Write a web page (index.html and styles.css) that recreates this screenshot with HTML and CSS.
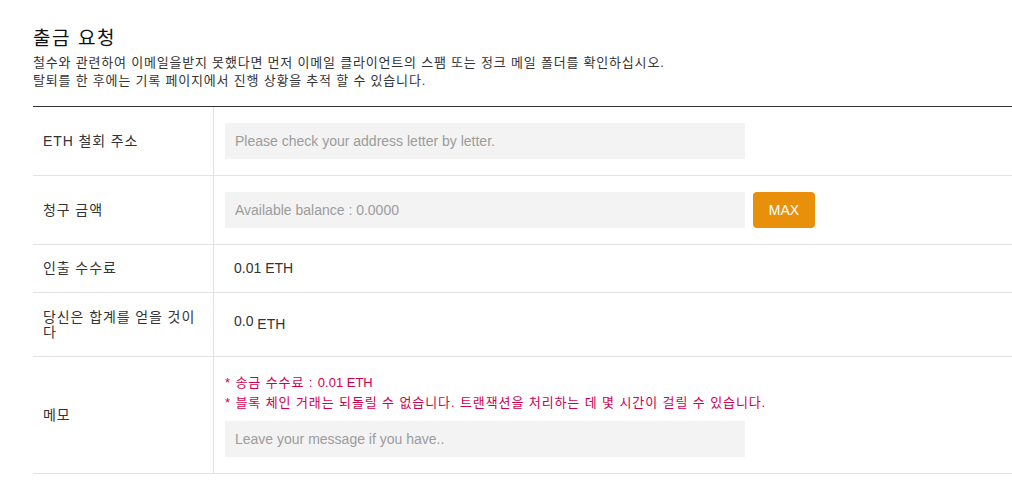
FILE: index.html
```html
<!DOCTYPE html>
<html lang="ko">
<head>
<meta charset="utf-8">
<title>출금 요청</title>
<link rel="stylesheet" href="styles.css">
</head>
<body>
<div class="page">
  <h1 class="title">출금 요청</h1>
  <p class="desc">철수와 관련하여 이메일을받지 못했다면 먼저 이메일 클라이언트의 스팸 또는 정크 메일 폴더를 확인하십시오.<br>탈퇴를 한 후에는 기록 페이지에서 진행 상황을 추적 할 수 있습니다.</p>
  <div class="form">
    <div class="row">
      <div class="label">ETH 철회 주소</div>
      <div class="value"><input class="field" type="text" placeholder="Please check your address letter by letter."></div>
    </div>
    <div class="row">
      <div class="label">청구 금액</div>
      <div class="value"><input class="field" type="text" placeholder="Available balance : 0.0000"><button class="max" type="button">MAX</button></div>
    </div>
    <div class="row">
      <div class="label">인출 수수료</div>
      <div class="value"><span class="text">0.01 ETH</span></div>
    </div>
    <div class="row">
      <div class="label label-wrap">당신은 합계를 얻을 것이다</div>
      <div class="value"><span class="text"><span class="num">0.0</span> ETH</span></div>
    </div>
    <div class="row">
      <div class="label">메모</div>
      <div class="value memo">
        <p class="note">* 송금 수수료 : <span class="latin">0.01 ETH</span><br>* 블록 체인 거래는 되돌릴 수 없습니다. 트랜잭션을 처리하는 데 몇 시간이 걸릴 수 있습니다.</p>
        <input class="field" type="text" placeholder="Leave your message if you have..">
      </div>
    </div>
  </div>
</div>
</body>
</html>
```

FILE: styles.css
```css
html, body {
  margin: 0;
  padding: 0;
  background: #fff;
  overflow-x: hidden;
}
body {
  font-family: "Liberation Sans", "Noto Sans CJK KR", Arial, sans-serif;
  color: #333;
}
.page {
  padding: 26px 0 0 33px;
}
.title {
  margin: 0;
  font-size: 19px;
  line-height: 26px;
  font-weight: normal;
  letter-spacing: 1.6px;
  color: #111;
}
.desc {
  margin: 2px 0 0;
  font-size: 13px;
  line-height: 18px;
  letter-spacing: 0.8px;
  color: #333;
}
.form {
  margin-top: 16px;
  border-top: 1px solid #333;
}
.row {
  display: flex;
  border-bottom: 1px solid #e3e3e3;
}
.label {
  width: 155px;
  flex: none;
  padding: 16px 15px 16px 10px;
  display: flex;
  align-items: center;
  font-size: 14px;
  line-height: 15px;
  letter-spacing: 0.9px;
  color: #333;
}
.label-wrap {
  padding-top: 17px;
  padding-bottom: 16px;
}
.value {
  flex: 1;
  border-left: 1px solid #e3e3e3;
  padding: 16px 12px 16px 11px;
  display: flex;
  align-items: center;
}
.field {
  width: 520px;
  height: 36px;
  box-sizing: border-box;
  border: none;
  background: #f3f3f3;
  padding: 0 10px;
  font-family: "Liberation Sans", "Noto Sans CJK KR", Arial, sans-serif;
  font-size: 14px;
  color: #333;
  outline: none;
}
.field::placeholder {
  color: #9c9c9c;
}
.max {
  margin-left: 8px;
  width: 62px;
  height: 36px;
  border: none;
  border-radius: 4px;
  background: #e8900a;
  color: #fff;
  font-family: "Liberation Sans", Arial, sans-serif;
  font-size: 14px;
  padding: 0;
}
.text {
  padding-left: 9px;
  font-size: 14px;
  line-height: 15px;
  color: #333;
}
.num {
  position: relative;
  top: -3px;
}
.memo {
  flex-direction: column;
  align-items: flex-start;
}
.note {
  margin: 0 0 8px;
  font-size: 13px;
  line-height: 20px;
  letter-spacing: 0.9px;
  color: #d1004f;
}
.latin {
  letter-spacing: 0;
}
```
